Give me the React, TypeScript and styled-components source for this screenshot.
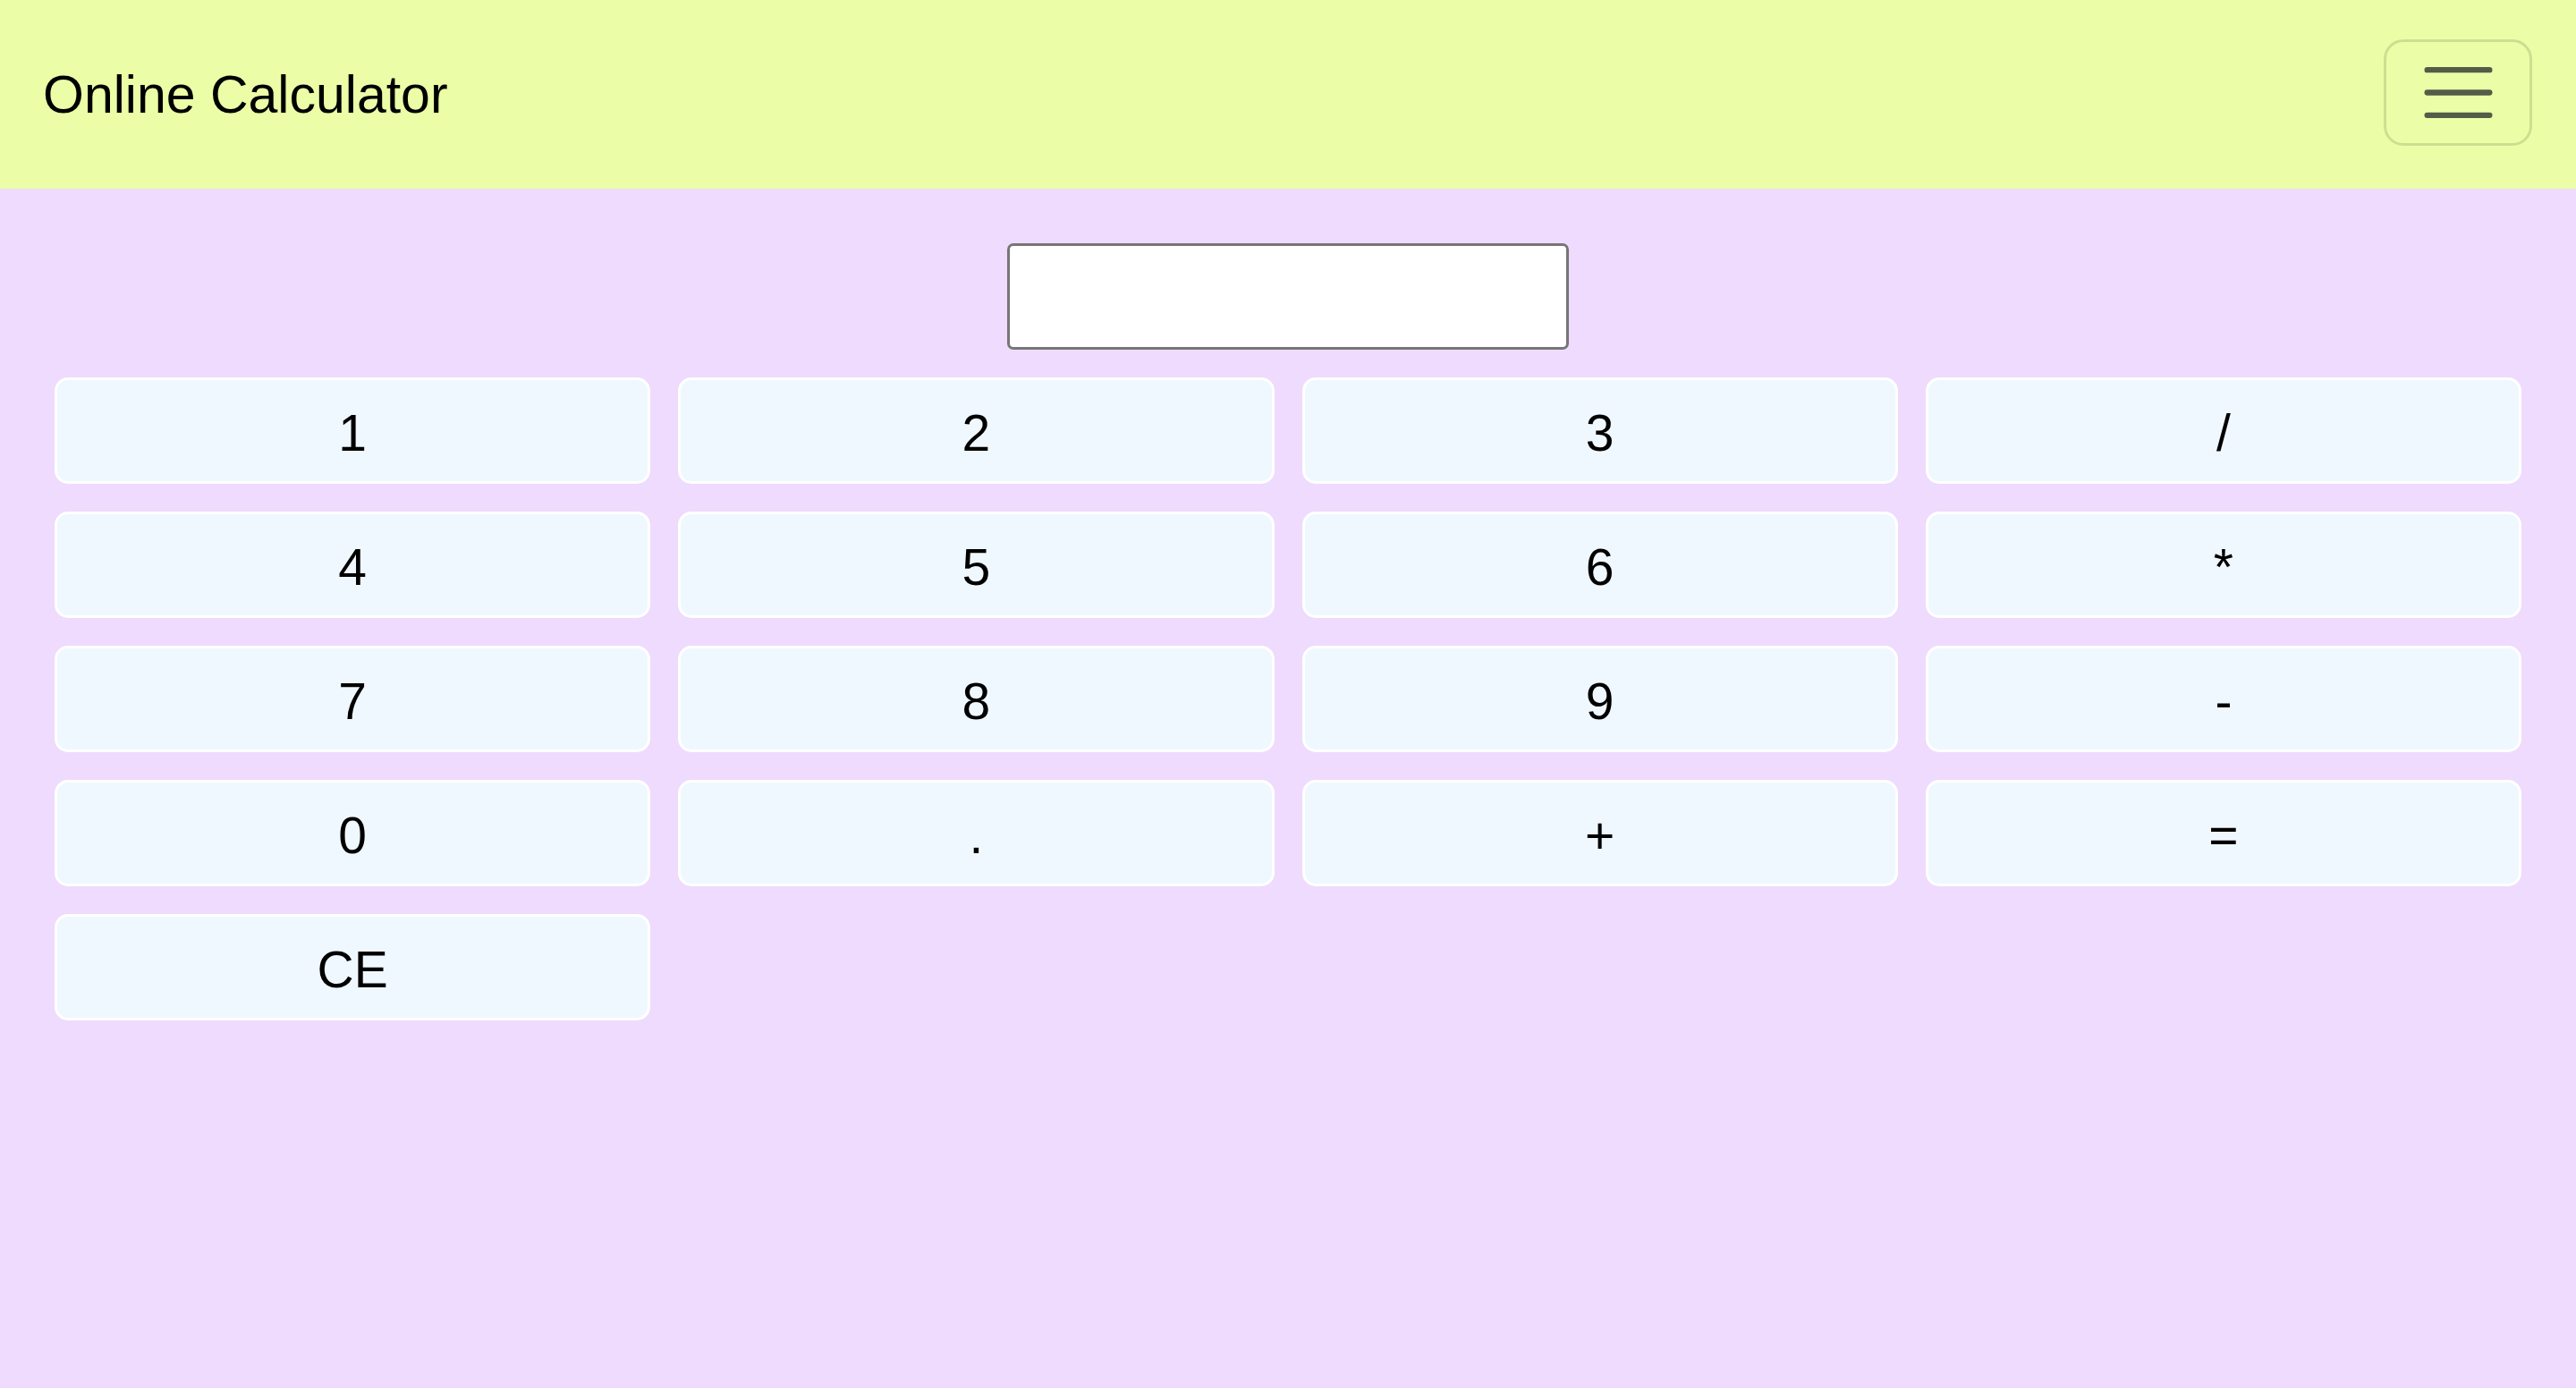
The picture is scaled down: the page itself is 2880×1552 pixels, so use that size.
import styled, { createGlobalStyle } from 'styled-components';

const GlobalStyle = createGlobalStyle`
    html, body {
        margin: 0;
        padding: 0;
        background-color: #efdbfd;
        font-family: "Liberation Sans", Arial, sans-serif;
    }
    * {
        box-sizing: border-box;
    }
`;

const Page = styled.div`
    min-height: 1552px;
    background-color: #efdbfd;
`;

const Navbar = styled.nav`
    height: 211px;
    background-color: #ebfda6;
    display: flex;
    align-items: center;
    justify-content: space-between;
    padding: 0 49px 4px 48px;
`;

const Brand = styled.a`
    font-size: 59px;
    color: #000;
    text-decoration: none;
    margin-top: 4px;
`;

const Toggler = styled.button`
    width: 166px;
    height: 119px;
    border: 3px solid rgba(0, 0, 0, 0.12);
    border-radius: 22px;
    background: transparent;
    display: flex;
    align-items: center;
    justify-content: center;
    padding: 0;
`;

const Main = styled.main`
    padding: 61px 61px 0;
    display: flex;
    flex-direction: column;
    align-items: center;
    gap: 31px;
`;

const Display = styled.input`
    width: 628px;
    height: 119px;
    border: 3px solid #767676;
    border-radius: 7px;
    background: #fff;
    font-size: 48px;
    font-family: "Liberation Sans", Arial, sans-serif;
    padding: 0 16px;
`;

const Keypad = styled.div`
    width: 100%;
    display: grid;
    grid-template-columns: repeat(4, 1fr);
    gap: 31px;
`;

const Key = styled.button`
    height: 119px;
    background-color: #f0f8ff;
    border: 3px solid #ffffff;
    border-radius: 15px;
    padding: 4px 0 0;
    font-family: "Liberation Sans", Arial, sans-serif;
    font-size: 57px;
    color: #000;
    cursor: pointer;
    &:hover {
        background-color: #e4f0fb;
    }
`;

const keys = ['1', '2', '3', '/', '4', '5', '6', '*', '7', '8', '9', '-', '0', '.', '+', '=', 'CE'];

function App() {
    return (
        <Page>
            <GlobalStyle />
            <Navbar>
                <Brand href="#">Online Calculator</Brand>
                <Toggler aria-label="Toggle navigation">
                    <svg width="95" height="95" viewBox="0 0 30 30">
                        <path
                            stroke="rgba(33, 37, 41, 0.75)"
                            strokeLinecap="round"
                            strokeMiterlimit="10"
                            strokeWidth="2"
                            d="M4 7h22M4 15h22M4 23h22"
                        />
                    </svg>
                </Toggler>
            </Navbar>
            <Main>
                <Display type="text" readOnly />
                <Keypad>
                    {keys.map((k) => (
                        <Key key={k}>{k}</Key>
                    ))}
                </Keypad>
            </Main>
        </Page>
    );
}

export default App;
